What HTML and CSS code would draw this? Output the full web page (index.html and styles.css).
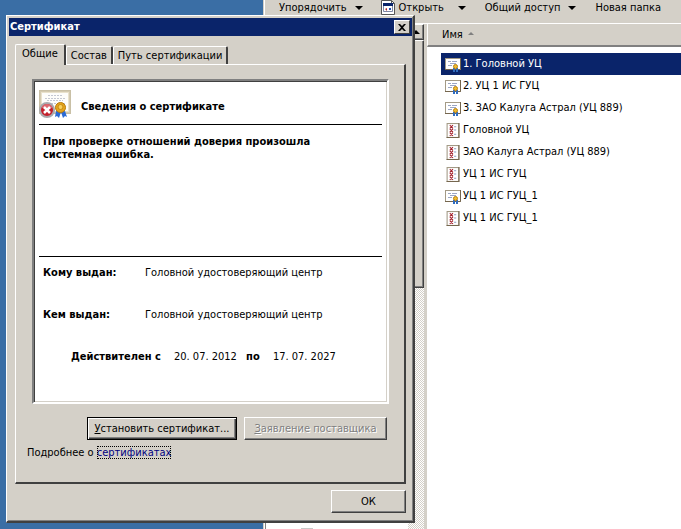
FILE: index.html
```html
<!DOCTYPE html>
<html lang="ru">
    <head>
        <meta charset="UTF-8">
        <title>Сертификат</title>
        <link rel="stylesheet" href="styles.css">
    </head>
    <body>
        <svg class="sprite" aria-hidden="true">
            <symbol id="cert" viewBox="0 0 16 15">
                <rect x="0.5" y="1.5" width="15" height="11" fill="#fff" stroke="#a39a86"/>
                <path d="M15.5 1v11.500H0" fill="none" stroke="#75664e"/>
                <path d="M3 4.500h3M7 4.500h5M5 6.500h6M3 8.500h4" stroke="#9ba6c4"/>
                <path d="M8 11h2v4H8zM11 11h2v4h-2z" fill="#2f6cc0"/>
                <circle cx="10.5" cy="9.5" r="2" fill="#f0bc30" stroke="#b8800c"/>
            </symbol>
            <symbol id="crl" viewBox="0 0 12 14">
                <rect x="0.5" y="0.5" width="11" height="13" fill="#fff" stroke="#a39a86"/>
                <path d="M11.5 0v13.5H0" fill="none" stroke="#75664e"/>
                <path d="M3 2l3 3M6 2L3 5M3 5.500l3 3M6 5.500l-3 3M3 9l3 3M6 9l-3 3" stroke="#a3202c"/>
                <path d="M7 3.500h2M7 6.500h2M7 10.500h2" stroke="#8a9ac0"/>
            </symbol>
        </svg>

        <main class="explorer">
            <div class="toolbar">
                <button class="toolbar__item" type="button">Упорядочить <span class="arrow"></span></button>
                <button class="toolbar__item toolbar__item--open" type="button">
                    <svg class="toolbar__icon" viewBox="0 0 14 15">
                        <path d="M0.500 0.500h10l3 3v11h-13z" fill="#fff" stroke="#555"/>
                        <path d="M10.500 0.500v3h3" fill="none" stroke="#555"/>
                        <path d="M2.500 4.500h9v7h-9z" fill="#fff" stroke="#7d86a5"/>
                        <path d="M2 3h10v3H2z" fill="#0a246a"/>
                        <path d="M4 9l2-1v3z" fill="#b02828"/>
                        <path d="M8 8h2v2H8z" fill="#2850b0"/>
                    </svg>
                    Открыть <span class="arrow"></span>
                </button>
                <button class="toolbar__item toolbar__item--share" type="button">Общий доступ <span class="arrow"></span></button>
                <button class="toolbar__item" type="button">Новая папка</button>
            </div>
            <div class="explorer__body">
                <div class="tree">
                    <span class="tree__folder"></span>
                    <div class="scrollbar">
                        <span class="scrollbar__up"><span class="arrow arrow--up"></span></span>
                        <span class="scrollbar__thumb"></span>
                    </div>
                </div>
                <div class="explorer__files">
                    <table class="files">
                        <thead>
                            <tr><th class="files__head">Имя <span class="arrow arrow--sort"></span></th></tr>
                        </thead>
                        <tbody>
                            <tr><td class="files__cell"><div class="file file--selected"><svg class="file__icon"><use href="#cert"/></svg>1. Головной УЦ</div></td></tr>
                            <tr><td class="files__cell"><div class="file"><svg class="file__icon"><use href="#cert"/></svg>2. УЦ 1 ИС ГУЦ</div></td></tr>
                            <tr><td class="files__cell"><div class="file"><svg class="file__icon"><use href="#cert"/></svg>3. ЗАО Калуга Астрал (УЦ 889)</div></td></tr>
                            <tr><td class="files__cell"><div class="file"><svg class="file__icon"><use href="#crl"/></svg>Головной УЦ</div></td></tr>
                            <tr><td class="files__cell"><div class="file"><svg class="file__icon"><use href="#crl"/></svg>ЗАО Калуга Астрал (УЦ 889)</div></td></tr>
                            <tr><td class="files__cell"><div class="file"><svg class="file__icon"><use href="#crl"/></svg>УЦ 1 ИС ГУЦ</div></td></tr>
                            <tr><td class="files__cell"><div class="file"><svg class="file__icon"><use href="#cert"/></svg>УЦ 1 ИС ГУЦ_1</div></td></tr>
                            <tr><td class="files__cell"><div class="file"><svg class="file__icon"><use href="#crl"/></svg>УЦ 1 ИС ГУЦ_1</div></td></tr>
                        </tbody>
                    </table>
                </div>
            </div>
        </main>

        <div class="dialog" role="dialog" aria-labelledby="dialogTitle">
            <div class="dialog__header">
                <h1 class="dialog__title" id="dialogTitle">Сертификат</h1>
                <button class="dialog__close" type="button" aria-label="Закрыть">
                    <svg class="dialog__cross" viewBox="0 0 8 7"><path d="M0 0h2l2 2 2-2h2L5 3.500 8 7H6L4 5 2 7H0l3-3.500z" fill="#000"/></svg>
                </button>
            </div>
            <div class="dialog__body">
                <div class="tabs" role="tablist">
                    <button class="tab tab--active" type="button" role="tab" aria-selected="true">Общие</button>
                    <button class="tab" type="button" role="tab">Состав</button>
                    <button class="tab" type="button" role="tab">Путь сертификации</button>
                </div>
                <div class="panel" role="tabpanel">
                    <div class="cert">
                        <div class="cert__header">
                            <svg class="cert__icon" viewBox="0 0 33 29">
                                <rect x="0.500" y="0.500" width="31" height="23" fill="#e9e2cd" stroke="#c9c0a6"/>
                                <rect x="1.500" y="1.500" width="29" height="21" fill="none" stroke="#bdb394" stroke-dasharray="1 1"/>
                                <rect x="3" y="3" width="26" height="18" fill="#fdfdfb"/>
                                <path d="M9 5.500h14M6 8.500h20M8 10.500h16M12 13.500h14" stroke="#c4c8d2" stroke-dasharray="2 1"/>
                                <path d="M17 21l5 1-2 6-2-2-2 1zM22 22l4-1 2 6-2-1-2 2z" fill="#2b6ad4"/>
                                <circle cx="21.500" cy="17.500" r="5" fill="#e5a51c" stroke="#b87a08"/>
                                <circle cx="21.500" cy="17" r="2.500" fill="#f7cf5c" stroke="#c88c10"/>
                                <circle cx="8" cy="20" r="7" fill="#c4202c" stroke="#a9a9ad" stroke-width="2"/>
                                <path d="M2.500 17.500a6 6 0 0 1 11 0q-5.500 3-11 0" fill="#dc6870"/>
                                <path d="M5 17l6 6M11 17l-6 6" stroke="#fff" stroke-width="2.500"/>
                            </svg>
                            <h2 class="cert__title">Сведения о сертификате</h2>
                        </div>
                        <p class="cert__message">При проверке отношений доверия произошла системная ошибка.</p>
                        <dl class="cert__list">
                            <dt>Кому выдан:</dt>
                            <dd>Головной удостоверяющий центр</dd>
                            <dt>Кем выдан:</dt>
                            <dd>Головной удостоверяющий центр</dd>
                        </dl>
                        <p class="cert__dates"><b>Действителен с</b> <span class="cert__date">20. 07. 2012</span> <b>по</b> <span class="cert__date">17. 07. 2027</span></p>
                    </div>
                    <div class="panel__buttons">
                        <button class="button button--default" type="button"><span><u>У</u>становить сертификат...</span></button>
                        <button class="button button--issuer" type="button" disabled><span><u>З</u>аявление поставщика</span></button>
                    </div>
                    <p class="panel__more">Подробнее о <a class="panel__link" href="#">сертификатах</a></p>
                </div>
                <div class="dialog__footer">
                    <button class="button button--ok" type="button">ОК</button>
                </div>
            </div>
        </div>
    </body>
</html>
```

FILE: styles.css
```css
:root{
    --face: #d4d0c8;
    --shadow: #808080;
    --dark: #404040;
    --navy: #0a246a;
    --desktop: #3a6ea5;
}

*{
    box-sizing: border-box;
}

html, body{
    margin: 0;
    height: 100%;
}

body{
    background-color: var(--desktop);
    color: #000;
    font: 11px/14px Tahoma, "DejaVu Sans Condensed", "DejaVu Sans", sans-serif;
    overflow: hidden;
}

h1, h2, p, dl, dd{
    margin: 0;
    font-size: 11px;
}

button{
    font: inherit;
    color: inherit;
    background-color: var(--face);
    border: 0;
    padding: 0;
}

.sprite{
    position: absolute;
    width: 0;
    height: 0;
}

.arrow{
    border: 4px solid transparent;
    border-top-color: #000;
    border-bottom: 0;
}

.arrow--up{
    border-top: 0;
    border-bottom: 4px solid #000;
}

.arrow--sort{
    display: inline-block;
    margin: 0 0 3px 2px;
    border-width: 0 3px 3px;
    border-bottom: 3px solid var(--shadow);
}

/* explorer */

.explorer{
    margin-left: 263px;
    height: 100%;
    display: flex;
    flex-direction: column;
    background-color: var(--face);
    border-left: 1px solid var(--face);
    box-shadow: inset 1px 0 #fff;
}

.toolbar{
    display: flex;
    gap: 18px;
    padding: 0 0 8px 15px;
    border-bottom: 1px solid #fff;
}

.toolbar__item{
    display: flex;
    align-items: center;
    gap: 8px;
    white-space: nowrap;
}

.toolbar__item--open{
    gap: 4px;
}

.toolbar__item--open .arrow{
    margin-left: 10px;
}

.toolbar__item--share{
    margin: 0 1px;
}

.toolbar__icon{
    width: 14px;
    height: 15px;
}

.explorer__body{
    flex: 1;
    display: flex;
    min-height: 0;
}

.tree{
    flex: 0 0 162px;
    display: flex;
    justify-content: space-between;
    margin-left: 1px;
    background-color: #fff;
    border-left: 1px solid var(--shadow);
    border-right: 3px solid var(--face);
}

.tree__folder{
    align-self: flex-end;
    width: 12px;
    height: 1px;
    margin-left: 35px;
    background-color: #c8c8c8;
}

.scrollbar{
    width: 16px;
    background: repeating-conic-gradient(#fff 0 25%, var(--face) 0 50%) 0 0 / 2px 2px;
}

.scrollbar__up,
.scrollbar__thumb{
    display: flex;
    align-items: center;
    justify-content: center;
    height: 16px;
    background-color: var(--face);
    border: 1px solid;
    border-color: #fff var(--dark) var(--dark) #fff;
    box-shadow: inset -1px -1px var(--shadow);
}

.scrollbar__thumb{
    height: 248px;
}

.explorer__files{
    flex: 1;
    background-color: #fff;
}

.files{
    width: 100%;
    border-spacing: 0;
}

.files__head{
    height: 23px;
    padding: 0 0 0 14px;
    background-color: var(--face);
    border-bottom: 2px solid var(--shadow);
    border-left: 1px solid #fff;
    font-weight: normal;
    text-align: left;
}

.files__cell{
    padding: 0 0 0 14px;
}

.files tbody::before{
    content: "";
    display: block;
    height: 6px;
}

.file{
    display: flex;
    align-items: center;
    gap: 2px;
    height: 22px;
    padding-left: 4px;
}

.file--selected{
    background-color: var(--navy);
    color: #fff;
}

.file__icon{
    width: 16px;
    height: 15px;
}

/* certificate dialog */

.dialog{
    position: absolute;
    left: 6px;
    top: 15px;
    width: 409px;
    padding: 1px;
    background-color: var(--face);
    border: 2px solid;
    border-color: #fff var(--dark) var(--dark) #fff;
    border-width: 1px 2px 2px 1px;
    outline: 0;
    box-shadow: inset 1px 1px var(--face), inset -1px -1px var(--shadow);
    padding: 2px 1px 1px 2px;
}

.dialog__header{
    display: flex;
    align-items: center;
    justify-content: space-between;
    height: 18px;
    padding: 0 2px 0 1px;
    background-color: var(--navy);
    color: #fff;
}

.dialog__close{
    display: flex;
    align-items: center;
    justify-content: center;
    width: 16px;
    height: 14px;
    border: 1px solid;
    border-color: #fff var(--dark) var(--dark) #fff;
}

.dialog__cross{
    width: 8px;
    height: 7px;
}

.dialog__body{
    padding: 8px 6px 7px;
}

.tabs{
    display: flex;
    align-items: flex-end;
}

.tab{
    height: 18px;
    padding: 0 4px;
    border: 1px solid #fff;
    border-bottom: 0;
    border-right: 2px solid var(--dark);
    border-radius: 2px 2px 0 0;
}

.tab--active{
    height: 21px;
    margin-bottom: -1px;
    padding: 0 6px 2px;
    z-index: 1;
}

.panel{
    padding: 14px 15px 22px 16px;
    border: 1px solid #fff;
    border-right: 2px solid var(--dark);
    border-bottom: 2px solid var(--dark);
}

.cert{
    padding: 9px 5px 38px;
    background-color: #fff;
    border: 2px solid;
    border-color: var(--shadow) #fff #fff var(--shadow);
    box-shadow: inset 1px 1px var(--dark), inset -1px -1px var(--face);
}

.cert__header{
    display: flex;
    align-items: center;
    gap: 9px;
    padding-bottom: 5px;
    border-bottom: 1px solid #000;
}

.cert__icon{
    width: 33px;
    height: 29px;
}

.cert__title{
    padding-top: 5px;
}

.cert__message{
    min-height: 132px;
    padding: 10px 60px 0 4px;
    border-bottom: 1px solid #000;
    font-weight: bold;
    line-height: 13px;
}

.cert__list{
    display: grid;
    grid-template-columns: 102px 1fr;
    row-gap: 28px;
    padding: 9px 4px 28px;
}

.cert__list dt{
    font-weight: bold;
}

.cert__dates{
    padding-left: 32px;
}

.cert__date{
    margin: 0 6px 0 10px;
}

.panel__buttons{
    display: flex;
    justify-content: flex-end;
    gap: 7px;
    padding: 13px 2px 6px 0;
}

.button{
    height: 23px;
    border: 1px solid;
    border-color: #fff var(--dark) var(--dark) #fff;
    box-shadow: inset -1px -1px var(--shadow);
}

.button--default{
    width: 150px;
    border-color: #000;
    box-shadow: inset 1px 1px #fff, inset -1px -1px var(--dark), inset -2px -2px var(--shadow);
}

.button--issuer{
    width: 143px;
}

.button:disabled{
    color: var(--shadow);
    text-shadow: 1px 1px #fff;
}

.button--ok{
    width: 75px;
}

.panel__more{
    margin-left: -5px;
}

.panel__link{
    color: #000080;
    text-decoration: none;
    outline: 1px dotted #000;
    outline-offset: -1px;
}

.dialog__footer{
    display: flex;
    justify-content: flex-end;
    padding-top: 6px;
}
```
